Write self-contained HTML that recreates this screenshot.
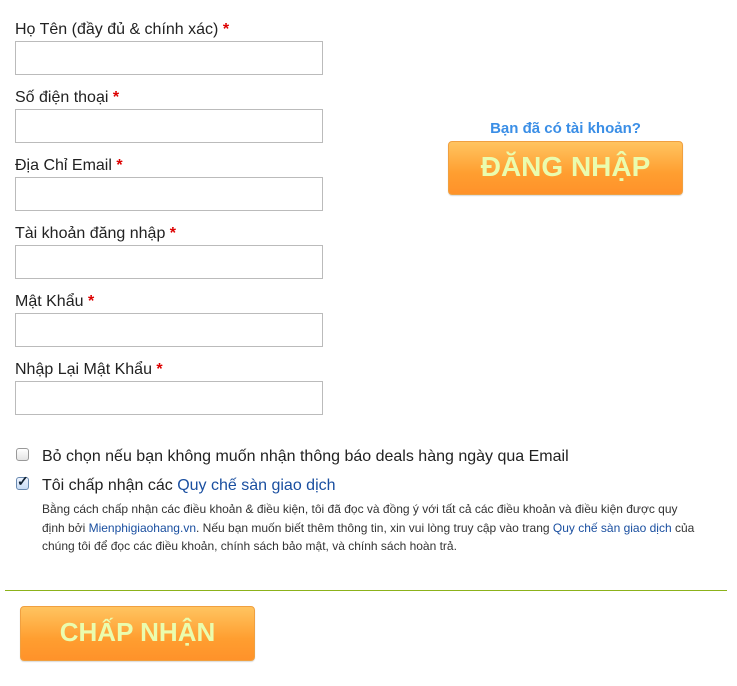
<!DOCTYPE html>
<html><head><meta charset="utf-8"><style>
body{margin:0;width:737px;height:686px;background:#fff;font-family:"Liberation Sans",Arial,sans-serif;position:relative;overflow:hidden;color:#222}
.l{position:absolute;left:15px;font-size:16px;line-height:18px}
.l b{color:#d00;font-weight:bold}
.i{position:absolute;left:15px;width:306px;height:32px;border:1px solid #bbb;background:#fff;box-sizing:content-box}
.btn{position:absolute;border:1px solid #f0a040;border-radius:4px;background:linear-gradient(#ffc460,#ff9e30 60%,#ff922a);color:#eafcae;font-weight:bold;text-align:center;box-shadow:0 1px 1px rgba(0,0,0,.15)}
a{color:#1a4fa0;text-decoration:none}
.cb{position:absolute;left:16px;width:11px;height:11px;border:1px solid #999;border-radius:3px;background:linear-gradient(#fff,#e4e4e4)}
.s{position:absolute;left:42px;font-size:12px;line-height:18.5px;color:#333}
</style></head><body>
<div class="l" style="top:21px">Họ Tên (đầy đủ &amp; chính xác) <b>*</b></div><div class="i" style="top:41px"></div>
<div class="l" style="top:89px">Số điện thoại <b>*</b></div><div class="i" style="top:109px"></div>
<div class="l" style="top:157px">Địa Chỉ Email <b>*</b></div><div class="i" style="top:177px"></div>
<div class="l" style="top:225px">Tài khoản đăng nhập <b>*</b></div><div class="i" style="top:245px"></div>
<div class="l" style="top:293px">Mật Khẩu <b>*</b></div><div class="i" style="top:313px"></div>
<div class="l" style="top:361px">Nhập Lại Mật Khẩu <b>*</b></div><div class="i" style="top:381px"></div>

<div style="position:absolute;left:448px;width:235px;top:120px;text-align:center;color:#3a8ee6;font-weight:bold;font-size:15px">Bạn đã có tài khoản?</div>
<div class="btn" style="left:448px;top:141px;width:233px;height:52px;line-height:50px;font-size:28px">ĐĂNG NHẬP</div>

<div class="cb" style="top:448px"></div>
<div class="l" style="left:42px;top:448px">Bỏ chọn nếu bạn không muốn nhận thông báo deals hàng ngày qua Email</div>
<div class="cb" style="top:477px;background:linear-gradient(#eef4ff,#c8dcf5);border-color:#6a8ab0"></div>
<div style="position:absolute;left:17px;top:473px;font-size:14px;color:#123;font-weight:bold">✓</div>
<div class="l" style="left:42px;top:477px">Tôi chấp nhận các <a>Quy chế sàn giao dịch</a></div>
<div class="s" style="top:500px">Bằng cách chấp nhận các điều khoản &amp; điều kiện, tôi đã đọc và đồng ý với tất cả các điều khoản và điều kiện được quy<br>định bởi <a>Mienphigiaohang.vn</a>. Nếu bạn muốn biết thêm thông tin, xin vui lòng truy cập vào trang <a>Quy chế sàn giao dịch</a> của<br>chúng tôi để đọc các điều khoản, chính sách bảo mật, và chính sách hoàn trả.</div>
<div style="position:absolute;left:5px;width:722px;top:590px;height:1px;background:#8cb21a"></div>
<div class="btn" style="left:20px;top:606px;width:233px;height:53px;line-height:51px;font-size:26px">CHẤP NHẬN</div>
</body></html>
